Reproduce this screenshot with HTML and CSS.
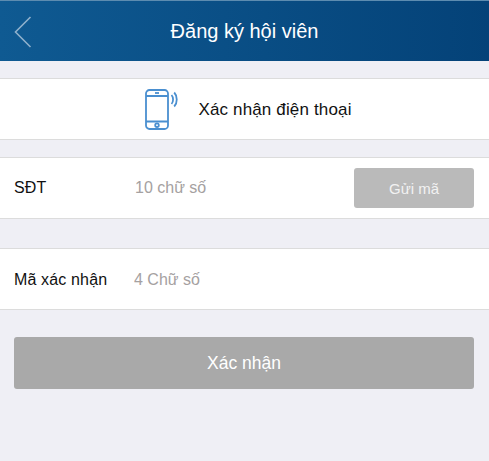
FILE: index.html
```html
<!DOCTYPE html>
<html lang="vi">
<head>
    <meta charset="UTF-8">
    <meta name="viewport" content="width=device-width, initial-scale=1.0">
    <title>Đăng ký hội viên</title>
    <link rel="stylesheet" href="styles.css">
</head>
<body>
    <header class="topbar">
        <a class="back" href="#" aria-label="Quay lại">
            <svg width="18" height="32" viewBox="0 0 18 32" fill="none" stroke="#8fb0cc" stroke-width="1.6">
                <path d="M16.5 1 L1.5 16 L16.5 31"/>
            </svg>
        </a>
        <h1>Đăng ký hội viên</h1>
    </header>

    <div class="step">
        <svg class="step-icon" width="34" height="42" viewBox="0 0 34 42" fill="none" stroke="#4a8fd0" stroke-width="1.8">
            <rect x="1" y="1" width="22" height="39" rx="3.5"/>
            <path d="M1 7 H23 M1 32.5 H23"/>
            <path d="M10 4 H14"/>
            <circle cx="12" cy="36.2" r="1.8"/>
            <path d="M26.5 6 C28.6 8.2 28.6 12.8 26.5 15"/>
            <path d="M29.2 3.5 C32.6 7 32.6 14 29.2 17.5"/>
        </svg>
        <span class="step-title">Xác nhận điện thoại</span>
    </div>

    <div class="row row-phone">
        <label for="phone">SĐT</label>
        <input type="text" id="phone" placeholder="10 chữ số">
        <button class="send-code">Gửi mã</button>
    </div>

    <div class="row row-code">
        <label for="code">Mã xác nhận</label>
        <input type="text" id="code" placeholder="4 Chữ số">
    </div>

    <div class="actions">
        <button class="confirm">Xác nhận</button>
    </div>
</body>
</html>
```

FILE: styles.css
```css
html, body {
    height: 100%;
}
body {
    margin: 0;
    background-color: #efeff5;
    font-family: "Liberation Sans", Arial, sans-serif;
    color: #111;
}
.topbar {
    position: relative;
    display: flex;
    align-items: center;
    justify-content: center;
    height: 60px;
    border-top: 1px solid #5d8cb0;
    background: linear-gradient(to right, #0f5a92, #044278);
}
.topbar h1 {
    margin: 0;
    font-size: 20px;
    font-weight: normal;
    color: #fff;
}
.back {
    position: absolute;
    left: 14px;
    top: 15px;
    line-height: 0;
}
.step, .row {
    display: flex;
    align-items: center;
    box-sizing: border-box;
    height: 62px;
    background-color: #fff;
    border-top: 1px solid #dcdcdc;
    border-bottom: 1px solid #dcdcdc;
    font-size: 16px;
}
.step {
    justify-content: center;
    margin-top: 17px;
    padding-left: 8px;
    font-size: 17px;
    letter-spacing: 0.15px;
}
.step-icon {
    margin-right: 19px;
    margin-top: 2px;
}
.step-title {
    padding-top: 2px;
}
.row {
    padding: 0 15px 0 14px;
}
.row-phone {
    margin-top: 17px;
}
.row-code {
    margin-top: 29px;
    padding-top: 2px;
}
.row label {
    width: 121px;
    flex-shrink: 0;
    letter-spacing: 0.15px;
}
.row-code label {
    width: 120px;
}
.row input {
    flex: 1;
    min-width: 0;
    border: none;
    outline: none;
    padding: 0;
    font-family: inherit;
    font-size: 16px;
}
.row input::placeholder {
    color: #a5a1a1;
}
.send-code {
    width: 120px;
    height: 40px;
    flex-shrink: 0;
    border: none;
    border-radius: 3px;
    background-color: #bababa;
    color: #f2f2f2;
    font-family: inherit;
    font-size: 15px;
}
.actions {
    padding: 27px 15px 0 14px;
}
.confirm {
    display: block;
    width: 100%;
    height: 52px;
    border: none;
    border-radius: 3px;
    background-color: #a9a9a9;
    color: #fff;
    font-family: inherit;
    font-size: 17.5px;
}
```
